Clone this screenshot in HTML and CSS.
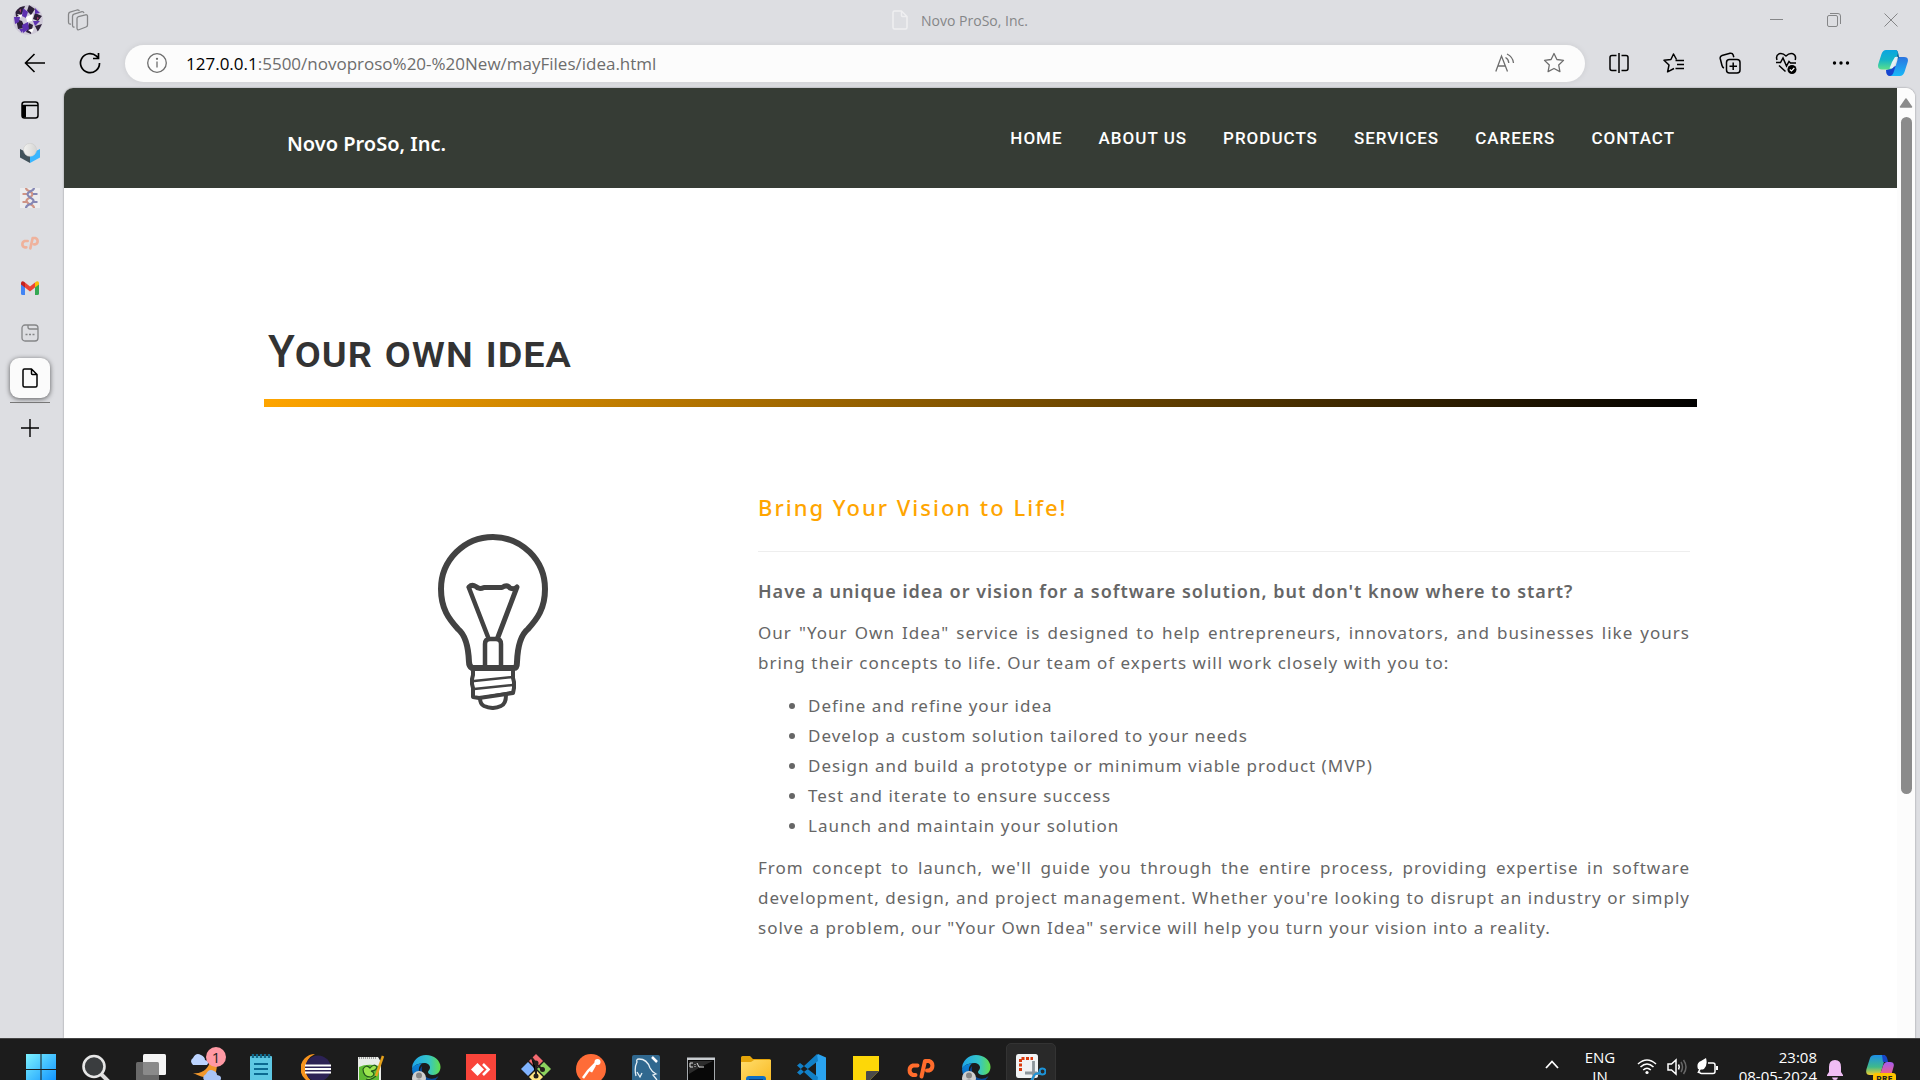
FILE: index.html
```html
<!DOCTYPE html>
<html lang="en">
<head>
<meta charset="utf-8">
<title>Novo ProSo, Inc.</title>
<link rel="stylesheet" href="styles.css">
</head>
<body>
<svg class="defs" aria-hidden="true">
  <defs>
    <linearGradient id="edgeA" x1="0" y1="0" x2="1" y2="0"><stop offset="0" stop-color="#1fa6ea"/><stop offset=".6" stop-color="#35c5c6"/><stop offset="1" stop-color="#63e04a"/></linearGradient>
    <linearGradient id="edgeB" x1="0" y1="0" x2="0" y2="1"><stop offset="0" stop-color="#0b86d8"/><stop offset="1" stop-color="#0a5cb8"/></linearGradient>
    <linearGradient id="win" x1="0" y1="0" x2="1" y2="1"><stop offset="0" stop-color="#7df3ff"/><stop offset="1" stop-color="#0a8eff"/></linearGradient>
    <linearGradient id="copA" x1="0" y1="0" x2="0" y2="1"><stop offset="0" stop-color="#0aa5e0"/><stop offset=".5" stop-color="#14b4c8"/><stop offset="1" stop-color="#5be08a"/></linearGradient>
    <linearGradient id="copB" x1="0" y1="0" x2="0" y2="1"><stop offset="0" stop-color="#2b74e0"/><stop offset="1" stop-color="#18b8f8"/></linearGradient>
    <linearGradient id="copC" x1="0" y1="0" x2="0" y2="1"><stop offset="0" stop-color="#1d8fe8"/><stop offset=".6" stop-color="#3fb98a"/><stop offset="1" stop-color="#f4d02c"/></linearGradient>
    <linearGradient id="copD" x1="0" y1="0" x2="0" y2="1"><stop offset="0" stop-color="#a45cf0"/><stop offset="1" stop-color="#f8607a"/></linearGradient>
    <linearGradient id="folder" x1="0" y1="0" x2="1" y2="1"><stop offset="0" stop-color="#ffdd6b"/><stop offset="1" stop-color="#f9b81f"/></linearGradient>
    <linearGradient id="egg" x1="0" y1="0" x2="1" y2="0"><stop offset="0" stop-color="#f2f2f0"/><stop offset="1" stop-color="#d6d6d4"/></linearGradient>
    <symbol id="page" viewBox="0 0 16 20"><path d="M1 2.500Q1 1 2.500 1H9.500L15 6.500V17.500Q15 19 13.500 19H2.500Q1 19 1 17.500ZM9.500 1V5.500Q9.500 6.500 10.500 6.500H15" fill="none" stroke="currentColor" stroke-width="1.500" stroke-linejoin="round"/></symbol>
    <symbol id="edge" viewBox="0 0 30 30">
      <path d="M1 15A14 14 0 0 1 15 1C23 1 29.500 6.500 29.500 13C29.500 18 26 21 22 21C18.500 21 17 19.500 17 18C17 16.500 19 16 19 13.500C19 11 16.500 9 13 9C6 9 1.500 13 1 15Z" fill="url(#edgeA)"/>
      <path d="M1 15C2 12 6 9.500 11 9.500C8 12 7 15 8.500 19C10.500 24.500 16 28 22 27A14 14 0 0 1 1 15Z" fill="url(#edgeB)"/>
      <path d="M11 12C10 17 12 23 19 24.500Q24 25.500 27.500 22Q24 29 15 29.500Q8 24 8.500 17Q9 14 11 12Z" fill="#0b4a96"/>
      <circle cx="8" cy="24" r="7" fill="#cfcfcf"/><circle cx="8" cy="21.500" r="3" fill="#868686"/><path d="M3 29Q3 25.500 8 25.500T13 29Z" fill="#868686"/>
    </symbol>
    <symbol id="cp" viewBox="0 0 30 21"><path d="M11.500 7.500H7A5 5 0 0 0 7 17H9.500M15.500 18.500L19 3H23A5 5 0 0 1 23 12.500H21" fill="none" stroke="currentColor" stroke-width="4" stroke-linejoin="round" stroke-linecap="round"/></symbol>
  </defs>
</svg>

<header class="titlebar">
  <div class="titlebar-side">
    <button class="avatar" aria-label="Profile">
      <svg width="30" height="30" viewBox="0 0 30 30"><clipPath id="round"><circle cx="15" cy="15" r="15"/></clipPath><g clip-path="url(#round)"><path fill="#cfcad8" d="M0 0H30V30H0Z"/><path fill="#2c2038" d="M2 3L12 1L9 9L3 12ZM16 0L22 4L18 10L14 6ZM22 8L29 11L25 16L20 14ZM3 14L9 16L12 23L5 24ZM16 18L20 20L18 29L13 27ZM22 21L29 19L25 27Z"/><path fill="#5e31b0" d="M10 3L15 7L13 13L9 11ZM22 3L27 8L22 9ZM1 12L7 12L6 17L2 19ZM9 20L15 17L16 24L10 28ZM20 16L27 16L22 21ZM6 24L10 24L9 28Z"/><path fill="#fff" d="M13 12L20 9L19 16L14 17ZM4 9L9 10L8 13ZM15 25L21 23L19 28Z"/><path fill="#a33a6a" d="M6 5L8 4L8 8ZM24 12L26 13L24 15Z"/></g></svg>
    </button>
    <button class="icon-button muted" aria-label="Workspaces">
      <svg width="22" height="22" viewBox="0 0 22 22" fill="none" stroke="currentColor" stroke-width="1.300" stroke-linejoin="round"><path d="M10 9.500Q10 8 11.500 7.600L18.500 5.800Q20.500 5.500 20.500 7.300V16Q20.500 17.500 19 18L12.500 20.500Q10 21.500 10 19ZM7.500 18Q5.500 18.500 5.500 16V7.500Q5.500 5.800 7 5.200L15 2.700Q16.500 2.500 17 4M4 15Q1.500 15.500 1.500 13V5.500Q1.500 3.800 3 3.200L10 1Q12 .6 12.300 2"/></svg>
    </button>
  </div>
  <div class="window-title">
    <svg class="faint" width="16" height="20"><use href="#page"/></svg>
    <span>Novo ProSo, Inc.</span>
  </div>
  <div class="window-buttons">
    <button class="icon-button muted" aria-label="Minimize"><svg width="14" height="14" viewBox="0 0 14 14" stroke="currentColor"><path d="M0 6.500H13"/></svg></button>
    <button class="icon-button muted" aria-label="Restore"><svg width="14" height="14" viewBox="0 0 14 14" fill="none" stroke="currentColor"><rect x=".5" y="2.500" width="10" height="11" rx="1.500"/><path d="M3 .5H11Q13.500 .5 13.500 3V11"/></svg></button>
    <button class="icon-button muted" aria-label="Close"><svg width="14" height="14" viewBox="0 0 14 14" stroke="currentColor"><path d="M.5 .5L13.500 13.500M13.500 .5L.5 13.500"/></svg></button>
  </div>
</header>

<div class="toolbar">
  <div class="nav-buttons">
    <button class="icon-button" aria-label="Back"><svg width="22" height="20" viewBox="0 0 22 20" fill="none" stroke="currentColor" stroke-width="1.600"><path d="M10.500 1L1.500 10L10.500 19M1.500 10H21"/></svg></button>
    <button class="icon-button" aria-label="Refresh"><svg width="22" height="22" viewBox="0 0 22 22" fill="none" stroke="currentColor" stroke-width="1.700"><path d="M20.500 11A9.500 9.500 0 1 1 17.500 4.200L19.500 6.200M19.500 1V6.500H14"/></svg></button>
  </div>
  <label class="address">
    <svg width="20" height="20" viewBox="0 0 20 20" fill="none" stroke="currentColor" stroke-width="1.300"><circle cx="10" cy="10" r="9.300"/><path d="M10 8.500V14.500"/><circle cx="10" cy="5.800" r=".5"/></svg>
    <span class="address-text"><span class="host">127.0.0.1</span><input class="path" type="text" aria-label="Address" value=":5500/novoproso%20-%20New/mayFiles/idea.html"></span>
    <button class="icon-button" aria-label="Read aloud"><svg width="20" height="20" viewBox="0 0 20 20" fill="none" stroke="currentColor" stroke-width="1.300"><path d="M.8 18.500L6.500 3L12.500 18.500M3 13H10.300M10.500 4.500Q13.500 6 13.800 10M12 1Q18 4 18.500 10"/></svg></button>
    <button class="icon-button" aria-label="Add to favorites"><svg width="22" height="22" viewBox="0 0 22 22" fill="none" stroke="currentColor" stroke-width="1.300" stroke-linejoin="round"><path d="M11 1.500L13.900 7.500L20.500 8.400L15.700 13L16.900 19.600L11 16.500L5.100 19.600L6.300 13L1.500 8.400L8.100 7.500Z"/></svg></button>
  </label>
  <div class="tools">
    <button class="icon-button" aria-label="Split screen"><svg width="20" height="20" viewBox="0 0 20 20" fill="none" stroke="currentColor" stroke-width="1.500"><path d="M10 0V20M7.500 2.500H3Q1 2.500 1 4.500V15.500Q1 17.500 3 17.500H7.500M12.500 2.500H17Q19 2.500 19 4.500V15.500Q19 17.500 17 17.500H12.500"/></svg></button>
    <button class="icon-button" aria-label="Favorites"><svg width="22" height="20" viewBox="0 0 22 20" fill="none" stroke="currentColor" stroke-width="1.500" stroke-linejoin="round"><path d="M13.500 6.500L10.500 1L7.900 6.500L1 7.300L6 12L4.600 18.800L11 15.500M12.500 7.500H21M14 11.500H21M12.500 15.500H21"/></svg></button>
    <button class="icon-button" aria-label="Collections"><svg width="22" height="22" viewBox="0 0 22 22" fill="none" stroke="currentColor" stroke-width="1.500"><rect x="7.500" y="7.500" width="13.500" height="13.500" rx="3"/><path d="M14.200 10.500V18M10.500 14.200H18M5 16Q3.500 15.500 3 13.500L1.200 6.500Q.8 4.200 3 3.500L11 1.200Q13.500 .8 14.200 3L14.800 5.200"/></svg></button>
    <button class="icon-button" aria-label="Browser essentials"><svg width="22" height="22" viewBox="0 0 22 22" fill="none" stroke="currentColor" stroke-width="1.500"><path d="M2 8Q.5 3.500 4 1.800Q7.500 .5 11 4Q14.500 .5 18 1.800Q21.500 3.500 20.200 8M1 10.500H5.500L8 6L11.500 14L14 9.500L15.500 11H21M4 13.500L10.500 19.500"/><circle cx="17" cy="17.500" r="4.500" fill="currentColor" stroke="none"/><path d="M14.800 17.500L16.500 19L19.300 16" stroke="#fff" stroke-width="1.200"/></svg></button>
    <button class="icon-button" aria-label="Settings and more"><svg width="20" height="6" viewBox="0 0 20 6" fill="currentColor"><circle cx="3.500" cy="3" r="1.700"/><circle cx="10" cy="3" r="1.700"/><circle cx="16.500" cy="3" r="1.700"/></svg></button>
  </div>
  <button class="icon-button copilot" aria-label="Copilot"><svg width="30" height="26" viewBox="0 0 30 26"><path d="M11 19L8 20Q8 26 12 26H18L22 14Z" fill="#1545d0"/><path d="M18 0Q20 0 21 7H25Q21 9 20 11Z" fill="#0e5f96"/><path d="M8 0H18Q21 1 19 6L15 17Q14 19.500 10 19.500H4Q-1 19.500 .3 14L3.500 4Q5 0 8 0Z" fill="url(#copA)"/><path d="M22 7H26Q31 7 29.700 12L26.500 22Q25 26 22 26H12Q15 25.500 16 21L19.500 10Q20.500 7 22 7Z" fill="url(#copB)"/><path d="M14 12L17 7H20L15 18Q13.500 18.500 11.500 18.500Z" fill="#e3f1f5"/></svg></button>
</div>

<main class="workspace">
  <nav class="tabs" aria-label="Tabs">
    <button class="tab tab-first" aria-label="Tab actions"><svg width="18" height="18" viewBox="0 0 18 18" fill="none" stroke="currentColor" stroke-width="1.500"><rect x="1" y="1" width="16" height="16" rx="2.500"/><path d="M1 4.500H17M3 5V16" /><path d="M3 4.500V16.500" stroke-width="4"/></svg></button>
    <button class="tab" aria-label="Tab 1"><svg width="20" height="20" viewBox="0 0 20 20"><path d="M0 6L10 11V20L0 14.500Z" fill="#40515a"/><path d="M20 6L10 11V20L20 14.500Z" fill="#38b6ff"/><ellipse cx="10" cy="6.800" rx="6.500" ry="6.500" fill="url(#egg)" stroke="#cbcbca" stroke-width=".6"/></svg></button>
    <button class="tab" aria-label="Tab 2"><svg width="20" height="20" viewBox="0 0 20 20" fill="none" stroke-width="2.200"><path d="M0 0H20V20H0Z" fill="#ececee"/><path d="M6 0Q6 2 10 3.500Q15 6 10 9.500Q5 12 7 14Q8 16 11 16.500Q14 18 14 20M2.500 6H7M2.500 14H7" stroke="#cf9485"/><path d="M14 0Q14 2 10 3.500Q5 6 10 9.500Q15 12 13 14Q12 16 9 16.500Q6 18 6 20M13 6H17.500M13 14H17.500" stroke="#8587b4"/></svg></button>
    <button class="tab pale-orange" aria-label="Tab 3"><svg width="20" height="14"><use href="#cp"/></svg></button>
    <button class="tab" aria-label="Gmail"><svg width="18" height="14" viewBox="0 0 18 14"><path d="M0 2V12.500Q0 14 1.500 14H4V5Z" fill="#4285f4"/><path d="M14 5V14H16.500Q18 14 18 12.500V2Z" fill="#34a853"/><path d="M4 1.500L9 5.500L14 1.500V6.500L9 10.500L4 6.500Z" fill="#ea4335"/><path d="M0 2Q.5 -1 4 1.500V6.500L0 3.500Z" fill="#c5221f"/><path d="M18 2Q17.500 -1 14 1.500V6.500L18 3.500Z" fill="#fbbc04"/></svg></button>
    <button class="tab muted" aria-label="Tab group"><svg width="18" height="18" viewBox="0 0 18 18" fill="none" stroke="currentColor" stroke-width="1.300"><rect x="1" y="1" width="16" height="16" rx="3"/><path d="M7 1V3Q7 5 9 5H17M4.500 10.500H6.500M8 10.500H10M11.500 10.500H13.500"/></svg></button>
    <button class="tab" aria-label="Novo ProSo, Inc."><span class="tab-active"><svg width="16" height="20"><use href="#page"/></svg></span></button>
    <hr class="tab-line">
    <button class="tab tab-new" aria-label="New tab"><svg width="18" height="18" viewBox="0 0 18 18" stroke="currentColor" stroke-width="1.400"><path d="M9 0V18M0 9H18"/></svg></button>
  </nav>

  <div class="viewport">
    <div class="site">
      <header class="site-header">
        <a class="brand" href="#">Novo ProSo, Inc.</a>
        <nav class="site-nav">
          <a href="#">HOME</a><a href="#">ABOUT US</a><a href="#">PRODUCTS</a><a href="#">SERVICES</a><a href="#">CAREERS</a><a href="#">CONTACT</a>
        </nav>
      </header>
      <section class="idea">
        <h1>Your own idea</h1>
        <div class="title-bar"></div>
        <div class="columns">
          <div class="picture">
            <svg width="110" height="176" viewBox="0 0 110 176" fill="none" stroke="#424242" stroke-width="6" stroke-linejoin="round" stroke-linecap="round">
              <path d="M34 134Q31 132 31 128Q30 103 20 95C11 85 3 75 3 55A52 52 0 0 1 107 55C107 75 99 85 90 95Q80 103 79 128Q79 134 76 134Z"/>
              <path d="M47 133V110Q47 105 52 105H58Q63 105 63 110V133M50 103L31 54" stroke-width="4.500"/>
              <path d="M31 53Q34 50 38 52.500Q41 56 46 53.500H64Q69 50 72 54Q76 56 79 53L60 103" stroke-width="5"/>
              <path d="M35 135V141L34 145V150L35 154V163L41 164L75 159L76 154V148L75 144V135" stroke-width="4"/>
              <path d="M36 147L75 143M36 155L75 151M41 164L75 158" stroke-width="2.500"/>
              <path d="M42 164Q42 170 46 172Q55 176 63 172Q68 170 68 161" stroke-width="4"/>
            </svg>
          </div>
          <div class="copy">
            <h2>Bring Your Vision to Life!</h2>
            <hr>
            <p class="lead">Have a unique idea or vision for a software solution, but don't know where to start?</p>
            <p>Our "Your Own Idea" service is designed to help entrepreneurs, innovators, and businesses like yours bring their concepts to life. Our team of experts will work closely with you to:</p>
            <ul>
              <li>Define and refine your idea</li>
              <li>Develop a custom solution tailored to your needs</li>
              <li>Design and build a prototype or minimum viable product (MVP)</li>
              <li>Test and iterate to ensure success</li>
              <li>Launch and maintain your solution</li>
            </ul>
            <p>From concept to launch, we'll guide you through the entire process, providing expertise in software development, design, and project management. Whether you're looking to disrupt an industry or simply solve a problem, our "Your Own Idea" service will help you turn your vision into a reality.</p>
          </div>
        </div>
      </section>
    </div>
    <div class="scrollbar">
      <svg width="14" height="10" viewBox="0 0 14 10"><path d="M7 1L12.500 9H1.500Z" fill="#8b8b8b" stroke="#8b8b8b" stroke-width="1.500" stroke-linejoin="round"/></svg>
      <div class="thumb"></div>
    </div>
  </div>
</main>

<footer class="taskbar">
  <div class="apps">
    <button class="app" aria-label="Start"><svg width="30" height="30" viewBox="0 0 30 30"><path d="M0 0H14.500V15H0ZM15.500 0H30V15H15.500ZM0 16H14.500V30H0ZM15.500 16H30V30H15.500Z" fill="url(#win)"/></svg></button>
    <button class="app" aria-label="Search"><svg width="30" height="30" viewBox="0 0 30 30"><path d="M20 20L29 29" stroke="#dcdcdc" stroke-width="4"/><circle cx="13" cy="12.500" r="10.500" fill="#3a3d3f" stroke="#e6e6e6" stroke-width="2.600"/></svg></button>
    <button class="app" aria-label="Task view"><svg width="30" height="30" viewBox="0 0 30 30"><rect x="7" y="0" width="23" height="21" rx="1.500" fill="#f4f4f4"/><rect x="0" y="8" width="23" height="22" rx="1.500" fill="#777" fill-opacity=".85"/></svg></button>
    <button class="app weather" aria-label="Weather"><svg width="30" height="30" viewBox="0 0 30 30"><path d="M24 6Q28 15 23 21T2 19Q10 20 15 15T18 4Z" fill="#f0972c"/><path d="M2 11Q-2 7 2 4Q5 -2 10 1Q14 3 14 6Q19 7 16 11Z" fill="#bcd4ff"/><path d="M14 27Q10 23 15 20Q18 14 23 17Q26 18 26 21Q32 22 29 27Z" fill="#a9c4f5"/></svg><span class="badge">1</span></button>
    <button class="app" aria-label="Notepad"><svg width="24" height="30" viewBox="0 0 24 30"><rect x="1" y="2" width="22" height="28" rx="1" fill="#5ec8e4"/><path d="M4 0V4M8 0V4M12 0V4M16 0V4M20 0V4" stroke="#126a8c" stroke-width="2.400"/><path d="M5 10H19M5 15H19M5 20H19" stroke="#0b6a92" stroke-width="2"/></svg></button>
    <button class="app" aria-label="Eclipse"><svg width="30" height="30" viewBox="0 0 30 30"><path d="M14 0A14 14 0 0 0 14 29A16 16 0 0 1 14 0Z" fill="#f7941e"/><circle cx="17" cy="14.500" r="13" fill="#2c2255"/><path d="M4 11.500H30M4 15H30M4 18.500H30" stroke="#fff" stroke-width="1.800"/></svg></button>
    <button class="app" aria-label="Notepad++"><svg width="28" height="30" viewBox="0 0 28 30"><path d="M1 3H21L24 8V30H1Z" fill="#e9ece8"/><path d="M2 13Q10 9 22 12V29H2Z" fill="#5fbb34"/><path d="M6 15Q9 10 13 14Q17 9 20 13Q19 17 14 17Q20 20 14 23Q6 23 6 15M9 25Q13 27 19 22" fill="#9be54f" stroke="#23561b" stroke-width="1.200"/><path d="M2 4H20" stroke="#888" stroke-width="1.500" stroke-dasharray="1 1"/><path d="M26 2L19 22" stroke="#e5a11c" stroke-width="2.500"/></svg></button>
    <button class="app" aria-label="Edge"><svg width="30" height="30"><use href="#edge"/></svg></button>
    <button class="app" aria-label="AnyDesk"><svg width="30" height="30" viewBox="0 0 30 30"><path d="M0 0H30V30H0Z" fill="#f9443a"/><path d="M11.500 9L18 15.500L11.500 22L5 15.500Z" fill="#fff"/><path d="M17 10L22.500 15.500L17 21" fill="none" stroke="#fff" stroke-width="2.600"/></svg></button>
    <button class="app" aria-label="Git"><svg width="30" height="30" viewBox="0 0 30 30"><path d="M15 0L22 7L15 14L8 7Z" fill="#f56a70"/><path d="M7 8L14 15L7 22L0 15Z" fill="#80b3ff"/><path d="M23 8L30 15L23 22L16 15Z" fill="#8dd35f"/><path d="M15 16L22 23L15 30L8 23Z" fill="#ffe680"/><path d="M10 3L15 9V23M15 10L21 15" stroke="#241f1c" stroke-width="2"/><circle cx="15" cy="22" r="2.500" fill="#241f1c"/><circle cx="21.500" cy="15.500" r="2.500" fill="#241f1c"/><circle cx="15" cy="9" r="2.500" fill="#241f1c"/></svg></button>
    <button class="app" aria-label="Postman"><svg width="30" height="30" viewBox="0 0 30 30"><circle cx="15" cy="15" r="15" fill="#ff6c37"/><path d="M20 9L12 17L7 24M19 11L15 18" stroke="#fff" stroke-width="2.500"/><circle cx="21.500" cy="8" r="3" fill="#fff"/></svg></button>
    <button class="app" aria-label="MySQL Workbench"><svg width="28" height="30" viewBox="0 0 28 30"><rect y="1" width="28" height="30" rx="2" fill="#30688f"/><path d="M4 22Q2 14 5 8Q4 5 7 5Q15 5 18 14Q20 18 24 20L21 21L25 26M5 18L8 23L10 19" fill="none" stroke="#e8f1f6" stroke-width="1.300"/><path d="M20 3L25 8" stroke="#fff" stroke-width="2.500"/></svg></button>
    <button class="app" aria-label="Command Prompt"><svg width="28" height="30" viewBox="0 0 28 30"><path d="M.5 4.500H27.500V26.500H.5Z" fill="#080808" stroke="#a5a9ad"/><path d="M0 3.500H28V6H0Z" fill="#c8ccd0"/><path d="M2 7H26Q14 12 2 20Z" fill="#2c2c2c"/><path d="M6 9H3V13H6M8 10V11M8 12V13M10 9L12 13M12 13H17" stroke="#ddd" fill="none"/></svg></button>
    <button class="app" aria-label="File Explorer"><svg width="30" height="30" viewBox="0 0 30 30"><path d="M0 3.500Q0 2 1.500 2H9L12 5H28.500Q30 5 30 6.500V12H0Z" fill="#e5a50a"/><path d="M0 8H10L13 6H30V30H0Z" fill="url(#folder)"/><path d="M5 30V25Q5 22 8 22H22Q25 22 25 25V30Z" fill="#0f6fc5"/><path d="M8 26H22" stroke="#0b3f7c" stroke-width="2"/></svg></button>
    <button class="app" aria-label="Visual Studio Code"><svg width="30" height="30" viewBox="0 0 30 30"><path d="M22 0L30 3.500V27L22 30L20 29V2Z" fill="#2aa3f0"/><path d="M22 7L4 21L1 18.500L21 0ZM22 23L4 9L1 11.500L21 30Z" fill="#1180c8"/></svg></button>
    <button class="app" aria-label="Sticky Notes"><svg width="26" height="30" viewBox="0 0 26 30"><path d="M0 2H26V17L13 30H0Z" fill="#fdd708"/><path d="M13 30V18Q13 17 14 17H26Z" fill="#4a4a4a"/></svg></button>
    <button class="app orange" aria-label="cPanel"><svg width="30" height="30" viewBox="0 0 30 30"><use href="#cp" y="4" width="30" height="21"/></svg></button>
    <button class="app" aria-label="Edge profile"><svg width="30" height="30"><use href="#edge"/></svg></button>
    <button class="app app-open" aria-label="Snipping Tool"><svg width="30" height="30" viewBox="0 0 30 30"><rect width="22" height="24" rx="2.500" fill="#f1f3f5"/><path d="M4.500 17V4.500H17" fill="none" stroke="#d9390d" stroke-width="3" stroke-dasharray="3 1.500"/><path d="M17.500 7V20L25 19M9 19H19L16 27" stroke="#8d969c" stroke-width="2.800" fill="none"/><circle cx="26.500" cy="17.500" r="3" fill="none" stroke="#1c93d8" stroke-width="2"/><path d="M19 20L15 27M19 20L24 19" stroke="#1c93d8" stroke-width="2"/><circle cx="16" cy="29" r="2.500" fill="none" stroke="#1c93d8" stroke-width="2"/></svg></button>
  </div>
  <div class="tray">
    <button class="tray-button" aria-label="Hidden icons"><svg width="14" height="10" viewBox="0 0 14 10" fill="none" stroke="#fff" stroke-width="1.800"><path d="M1 8L7 1.500L13 8"/></svg></button>
    <button class="language">ENG<br>IN</button>
    <button class="status" aria-label="Network, volume and battery">
      <svg width="20" height="16" viewBox="0 0 20 16" fill="none" stroke="#fff" stroke-width="1.600"><path d="M1 5Q10 -3 19 5M3.500 8Q10 2 16.500 8M6.200 11Q10 7.500 13.800 11"/><circle cx="10" cy="13.500" r="1.600" fill="#fff" stroke="none"/></svg>
      <svg width="20" height="18" viewBox="0 0 20 18" fill="none" stroke="#fff" stroke-width="1.500"><path d="M1 6H4.500L9 2V16L4.500 12H1Z"/><path d="M11.500 6.500Q13 9 11.500 11.500"/><path d="M14 4Q17 9 14 14M16.500 2Q21.500 9 16.500 16" stroke="#666"/></svg>
      <svg width="22" height="18" viewBox="0 0 22 18" fill="none" stroke="#fff" stroke-width="1.500"><path d="M11 5H16Q18 5 18 7V13.500Q18 15.500 16 15.500H4.500Q2.500 15.500 2.500 13.500"/><path d="M19 8H21V12H19Z" fill="#fff" stroke="none"/><path d="M9 0Q11 7 7 11Q4 12 1 11Q-1 5 4 3Z" fill="#fff" stroke="none"/><path d="M5 7L1 15"/></svg>
    </button>
    <button class="clock">23:08<br>08-05-2024</button>
    <button class="tray-button" aria-label="Notifications"><svg width="16" height="20" viewBox="0 0 16 20" fill="#f0bdf5"><path d="M8 0Q14 0 14 7V12L16 15V16H0V15L2 12V7Q2 0 8 0ZM5 17.500H11Q10.500 20 8 20T5 17.500Z"/></svg></button>
    <button class="tray-copilot" aria-label="Copilot"><svg width="28" height="28" viewBox="0 0 28 28"><path d="M9 0H18Q20 1 18.500 5L15 17Q14 20 10 20H4Q-1 20 .5 14L4 3Q5 0 9 0Z" fill="url(#copC)"/><path d="M16 0H18Q21 0 22 7H17Z" fill="#1746c8"/><path d="M21 7H24Q29 7 27.500 12L25 21H12Q15 18 16 14Q17.500 7 21 7Z" fill="url(#copD)"/></svg><span class="pre">PRE</span></button>
  </div>
</footer>
</body>
</html>
```
FILE: styles.css
```css
* {
  box-sizing: border-box;
}

body {
  margin: 0;
  height: 100vh;
  display: flex;
  flex-direction: column;
  overflow: hidden;
  background: #dddee2;
  color: #000;
  font-family: "Open Sans", "Noto Sans", sans-serif;
  font-size: 17px;
}

button {
  padding: 0;
  border: 0;
  background: none;
  color: inherit;
  font: inherit;
}

svg {
  display: block;
  flex: none;
}

.defs {
  position: absolute;
  width: 0;
  height: 0;
}

.icon-button {
  display: flex;
  align-items: center;
  justify-content: center;
}

.muted {
  color: #858688;
}

.faint {
  color: #efeff1;
}

/* Browser title bar */
.titlebar {
  flex: none;
  display: grid;
  grid-template-columns: 1fr auto 1fr;
  align-items: center;
  height: 40px;
  padding: 0 22px 0 13px;
}

.titlebar-side {
  display: flex;
  align-items: center;
  gap: 24px;
}

.window-title {
  display: flex;
  align-items: center;
  gap: 13px;
  padding-left: 9px;
  color: #858688;
  font-size: 14px;
}

.window-buttons {
  display: flex;
  justify-content: flex-end;
  gap: 43px;
}

/* Address row */
.toolbar {
  flex: none;
  display: flex;
  align-items: center;
  height: 48px;
  padding: 0 12px 2px 24px;
}

.nav-buttons {
  display: flex;
  gap: 33px;
  width: 101px;
}

.address {
  flex: 1;
  display: flex;
  align-items: center;
  gap: 28px;
  height: 37px;
  padding: 0 20px 0 22px;
  border-radius: 19px;
  background: #fcfcfc;
  box-shadow: 0 0 6px rgba(0, 0, 0, 0.08);
  color: #6d6d6d;
}

.address-text {
  flex: 1;
  display: flex;
  align-items: center;
  margin-left: -9px;
}

.host {
  color: #000;
}

.path {
  flex: 1;
  min-width: 0;
  padding: 0;
  border: 0;
  outline: 0;
  background: none;
  color: #6d6d6d;
  font: inherit;
}

.tools {
  display: flex;
  align-items: center;
  gap: 34px;
  margin-left: 24px;
}

.copilot {
  margin-left: 27px;
}

/* Vertical tabs */
.workspace {
  flex: 1;
  min-height: 0;
  display: flex;
}

.tabs {
  flex: none;
  width: 64px;
  padding-right: 4px;
  display: flex;
  flex-direction: column;
  align-items: center;
}

.tab {
  display: flex;
  align-items: center;
  justify-content: center;
  width: 40px;
  height: 45px;
}

.tab-first {
  height: 42px;
  padding-top: 2px;
}

.tab-active {
  display: flex;
  align-items: center;
  justify-content: center;
  width: 40px;
  height: 40px;
  border-radius: 9px;
  background: #fbfbfb;
  box-shadow: 0 1px 5px rgba(0, 0, 0, 0.6);
}

.tab-line {
  width: 40px;
  height: 1px;
  margin: 2px 0;
  border: 0;
  background: #777;
}

.pale-orange {
  color: #efb29c;
}

.orange {
  color: #ff6c2c;
}

/* Page area */
.viewport {
  flex: 1;
  min-width: 0;
  display: flex;
  margin-right: 5px;
  border-radius: 9px 9px 0 0;
  overflow: hidden;
  background: #fff;
  box-shadow: 0 0 2px rgba(0, 0, 0, 0.4);
}

.site {
  flex: 1;
  min-width: 0;
  color: #666;
  font-family: "Noto Sans", "Open Sans", sans-serif;
}

.scrollbar {
  width: 18px;
  height: 100%;
  padding-top: 10px;
  display: flex;
  flex-direction: column;
  align-items: center;
  gap: 9px;
  background: #fcfcfc;
}

.thumb {
  width: 11px;
  height: 72%;
  border-radius: 6px;
  background: #8b8b8b;
}

.site-header {
  display: flex;
  align-items: center;
  justify-content: space-between;
  height: 100px;
  padding: 0 222px 0 223px;
  background: #363c35;
}

.site-header a {
  color: #fff;
  text-decoration: none;
}

.brand {
  padding-top: 10px;
  font-size: 20px;
  font-weight: 600;
}

.site-nav {
  display: flex;
  gap: 36px;
  font-family: Roboto, sans-serif;
  font-size: 17px;
  font-weight: 500;
  letter-spacing: 1px;
}

.idea {
  padding: 134px 200px 0;
}

h1 {
  margin: 0;
  padding-left: 4px;
  color: #333;
  font-family: Roboto, sans-serif;
  font-size: 44px;
  line-height: 60px;
  font-weight: 500;
  font-variant: small-caps;
  letter-spacing: 1px;
}

.title-bar {
  height: 8px;
  margin-top: 17px;
  background: linear-gradient(135deg, orange, #000);
}

.columns {
  display: grid;
  grid-template-columns: 1fr 2fr;
  gap: 28px;
  padding: 80px 7px 0 0;
}

.picture {
  display: flex;
  justify-content: center;
  padding: 47px 8px 0 0;
}

h2 {
  margin: 0;
  color: orange;
  font-size: 22px;
  line-height: 40px;
  font-weight: 500;
  letter-spacing: 2px;
}

.copy hr {
  height: 1px;
  margin: 24px 0;
  border: 0;
  background: #eee;
}

.copy p,
.copy ul {
  margin: 0 0 12px;
  font-size: 17px;
  line-height: 30px;
  letter-spacing: 1px;
}

.copy p {
  text-align: justify;
}

.copy .lead {
  font-size: 18px;
  font-weight: 600;
}

.copy ul {
  margin-top: 13px;
  padding-left: 50px;
}

/* Taskbar, partly below the window edge */
.taskbar {
  flex: none;
  display: flex;
  justify-content: space-between;
  height: 42px;
  padding: 0 26px 0 13px;
  border-top: 1px solid #444;
  overflow: hidden;
  background: #1c1c1c;
  color: #fff;
  font-size: 15px;
}

.apps {
  display: flex;
}

.app {
  position: relative;
  display: flex;
  justify-content: center;
  width: 55px;
  height: 50px;
  padding-top: 15px;
}

.app-open {
  width: 50px;
  height: 46px;
  margin: 4px 0 0 3px;
  padding-top: 10px;
  border: 1px solid #333;
  border-radius: 5px;
  background: #292929;
}

.badge {
  position: absolute;
  top: 8px;
  right: 7px;
  width: 20px;
  border-radius: 10px;
  background: #ff99a4;
  color: #222;
  line-height: 20px;
}

.tray {
  display: flex;
  align-items: flex-start;
  padding-top: 9px;
  line-height: 19px;
}

.tray-button {
  padding-top: 12px;
}

.language {
  width: 40px;
  margin: 0 17px 0 21px;
}

.status {
  display: flex;
  gap: 10px;
  align-items: center;
  padding-top: 10px;
}

.clock {
  width: 98px;
  margin-right: 10px;
  text-align: right;
}

.tray-copilot {
  position: relative;
  margin-left: 23px;
  padding-top: 7px;
}

.pre {
  position: absolute;
  left: 7px;
  top: 25px;
  padding: 0 3px;
  border-radius: 3px;
  background: #ffc400;
  color: #222;
  font-size: 9px;
  font-weight: 700;
  line-height: 12px;
}
```
